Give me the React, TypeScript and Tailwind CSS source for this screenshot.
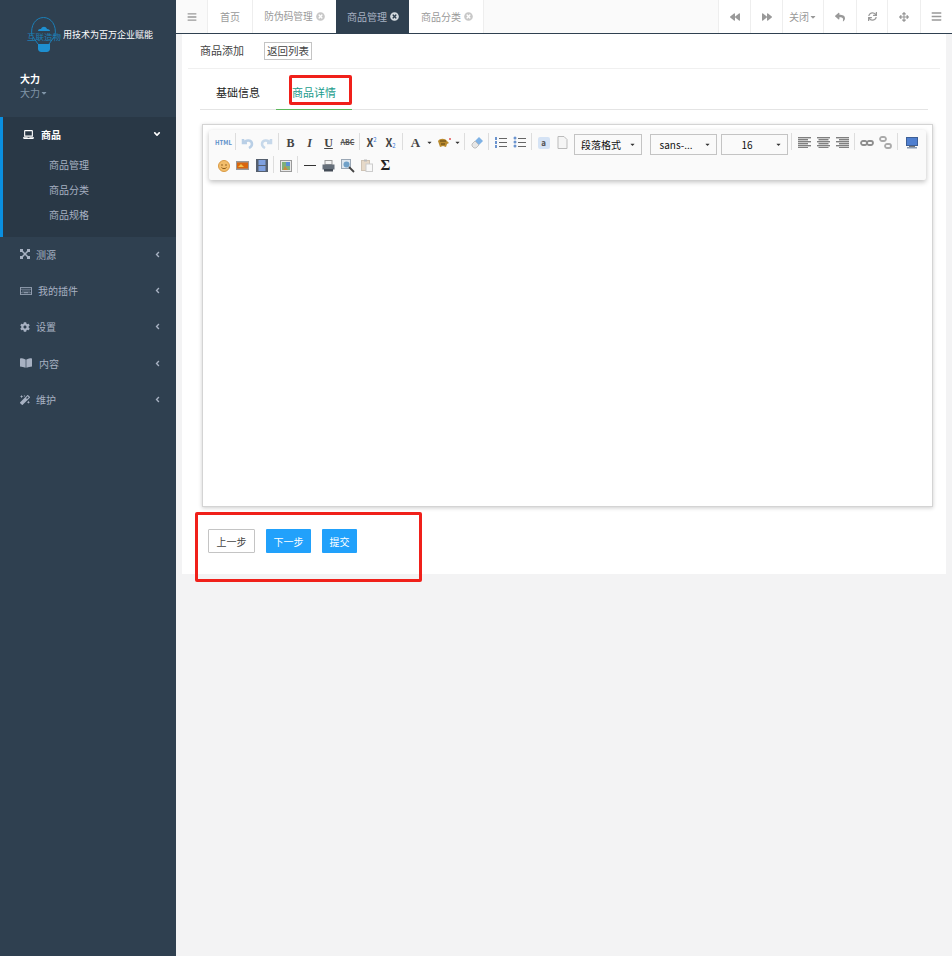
import * as React from 'react';
import {
  FaAngleDown,
  FaAngleLeft,
  FaArrowsAlt,
  FaBackward,
  FaBars,
  FaBookOpen,
  FaCaretDown,
  FaCog,
  FaForward,
  FaLaptop,
  FaMagic,
  FaRegKeyboard,
  FaReply,
  FaSync,
  FaTimesCircle,
} from 'react-icons/fa';

function CrossIcon() {
  return (
    <svg width="10" height="10" viewBox="0 0 10 10" fill="none">
      <path d="M1.500 1.500l7 7M8.500 1.500l-7 7" stroke="currentColor" strokeWidth="1.500" />
      <rect x="0" y="0" width="3" height="3" fill="currentColor" />
      <rect x="7" y="0" width="3" height="3" fill="currentColor" />
      <rect x="0" y="7" width="3" height="3" fill="currentColor" />
      <rect x="7" y="7" width="3" height="3" fill="currentColor" />
    </svg>
  );
}

const menu = [
  { label: '测源', icon: <CrossIcon />, gap: 'ml-[6px]' },
  { label: '我的插件', icon: <FaRegKeyboard size={12} />, gap: 'ml-[6px]' },
  { label: '设置', icon: <FaCog size={10} />, gap: 'ml-[6px]' },
  { label: '内容', icon: <FaBookOpen size={12} />, gap: 'ml-[7px]' },
  { label: '维护', icon: <FaMagic size={10} />, gap: 'ml-[6px]' },
];

function Sidebar() {
  return (
    <aside className="w-[176px] shrink-0 bg-[#2f4050] text-[10px]">
      <div className="h-[117px] pl-[20px] pt-[17px]">
        <div className="flex items-center pl-[7px]">
          <div className="relative h-[36px] w-[36px] shrink-0">
            <svg width="36" height="36" viewBox="0 0 36 36" fill="none">
              <path d="M5 19C3 8 9 .5 16.500 .5S30 8 28 19" stroke="#1b7fb8" strokeWidth="1" />
              <path d="M6 20l5 7M27 20l-5 7" stroke="#1b7fb8" strokeWidth="1" />
              <path d="M11 27h12v5c0 2-2 3-3 3h-6c-1 0-3-1-3-3z" fill="#1e8fd0" />
              <path d="M11 14c0-2 2-2 3-2 1-3 5-3 6 0 2 0 3 1 3 2z" fill="#1e8fd0" />
            </svg>
            <span className="absolute left-0 top-[12px] whitespace-nowrap text-[8.500px] leading-[14px] text-[#1e7fb4]">
              互联造物
            </span>
          </div>
          <span className="whitespace-nowrap text-[9px] leading-[14px] text-white">用技术为百万企业赋能</span>
        </div>
        <div className="mt-[19px] text-[10px] font-bold leading-[14px] text-white">大力</div>
        <div className="flex items-center text-[10px] leading-[14px] text-[#8095a8]">
          大力
          <FaCaretDown size={8} />
        </div>
      </div>

      <div className="h-[120px] border-l-[3px] border-[#0a8fe0] bg-[#293846]">
        <div className="flex h-[34px] items-center pl-[20px] pr-[14px] text-white">
          <FaLaptop size={11} />
          <span className="ml-[7px] font-bold">商品</span>
          <FaAngleDown size={10} className="ml-auto" />
        </div>
        <div className="pl-[46px] pt-[1px] text-[#a7b1c2]">
          <div className="h-[25px] leading-[25px]">商品管理</div>
          <div className="h-[25px] leading-[25px]">商品分类</div>
          <div className="h-[25px] leading-[25px]">商品规格</div>
        </div>
      </div>

      <nav className="text-[#a7b1c2]">
        {menu.map((item) => (
          <div key={item.label} className="flex h-[36.400px] items-center pb-[2px] pl-[20px] pr-[14px]">
            {item.icon}
            <span className={item.gap}>{item.label}</span>
            <FaAngleLeft size={9} className="ml-auto" />
          </div>
        ))}
      </nav>
    </aside>
  );
}

function TabClose({ dark }: { dark?: boolean }) {
  return <FaTimesCircle size={9} className={dark ? 'ml-[3px] text-[#d5dbe0]' : 'ml-[3px] text-[#c8c8c8]'} />;
}

function TopBar() {
  const cell = 'flex h-full items-center justify-center border-l border-[#eeeeee] bg-white text-[#999999]';
  return (
    <header className="flex h-[34px] border-b border-[#2f4050] bg-[#fafafa] text-[10px] text-[#999999]">
      <div className="flex w-[31px] items-center justify-center">
        <FaBars size={10} className="text-[#999999]" />
      </div>
      <div className={`${cell} w-[45px]`}>首页</div>
      <div className={`${cell} w-[84px] text-[9.700px]`}>
        防伪码管理
        <TabClose />
      </div>
      <div className="flex h-full w-[73px] items-center justify-center bg-[#2f4050] pl-[1px] text-[#a7b1c2]">
        商品管理
        <TabClose dark />
      </div>
      <div className="flex h-full w-[75px] items-center justify-center border-r border-[#eeeeee] bg-white pl-[2px]">
        商品分类
        <TabClose />
      </div>
      <div className="ml-auto flex h-full">
        <div className={`${cell} w-[32px]`}><FaBackward size={10} /></div>
        <div className={`${cell} w-[32px]`}><FaForward size={10} /></div>
        <div className={`${cell} w-[41px]`}>
          关闭
          <FaCaretDown size={8} />
        </div>
        <div className={`${cell} w-[33px]`}><FaReply size={10} /></div>
        <div className={`${cell} w-[31px]`}><FaSync size={9} /></div>
        <div className={`${cell} w-[33px]`}><FaArrowsAlt size={10} /></div>
        <div className={`${cell} w-[32px]`}><FaBars size={11} /></div>
      </div>
    </header>
  );
}

function Btn({ children }: { children: React.ReactNode }) {
  return <div className="flex h-[20px] w-[19px] shrink-0 items-center justify-center">{children}</div>;
}

function Sep() {
  return (
    <div className="flex h-[20px] w-[5px] shrink-0 justify-center">
      <div className="h-[17px] w-px bg-[#dddddd]" />
    </div>
  );
}

function Select({ label, width, pad }: { label: string; width: string; pad: string }) {
  return (
    <div className={`${width} ${pad} relative mt-[3px] flex h-[21px] shrink-0 items-center justify-center border border-[#c4c4c4] text-[10px] text-[#111111]`}>
      {label}
      <FaCaretDown size={7} className="absolute right-[5px] text-[#333333]" />
    </div>
  );
}

function Arrow() {
  return <FaCaretDown size={7} className="w-[9px] shrink-0 text-[#333333]" />;
}

function Lines({ aligns }: { aligns: number[] }) {
  return (
    <svg width="13" height="11" viewBox="0 0 13 11">
      {aligns.map((x, i) => (
        <rect key={i} x={x} y={i * 2} width={13 - (i % 2 === 0 ? 0 : 3)} height="1.400" fill="#808080" />
      ))}
    </svg>
  );
}

function ListIcon({ kind }: { kind: 'ol' | 'ul' }) {
  return (
    <svg width="13" height="13" viewBox="0 0 13 13">
      {[2, 6, 10].map((y) => (
        <g key={y}>
          {kind === 'ol' ? (
            <rect x="1" y={y - 1} width="2" height="3" fill="#6b94cf" />
          ) : (
            <circle cx="2" cy={y} r="1.500" fill="#6b94cf" />
          )}
          <rect x="5" y={y} width="8" height="1" fill="#666666" />
        </g>
      ))}
    </svg>
  );
}

function Toolbar() {
  const serif = "font-['Liberation_Serif',serif]";
  return (
    <div className="mx-[6px] mt-[5px] h-[50px] rounded-[2px] bg-[#fafafa] pl-[5px] pt-[1px] shadow-[0_2px_5px_rgba(0,0,0,0.25)]">
      <div className="flex h-[23px] items-center">
        <Btn><span className="text-[6px] font-bold text-[#5b8fc9]">HTML</span></Btn>
        <Sep />
        <Btn>
          <svg width="13" height="12" viewBox="0 0 13 12" fill="none" stroke="#b9cfe6" strokeWidth="2.500">
            <path d="M2 2v4h4M3 6c2-4 8-3 8 1 0 2-1 3-3 4" />
          </svg>
        </Btn>
        <Btn>
          <svg width="13" height="12" viewBox="0 0 13 12" fill="none" stroke="#c6d8ea" strokeWidth="2.500">
            <path d="M11 2v4H7M10 6C8 2 2 3 2 7c0 2 1 3 3 4" />
          </svg>
        </Btn>
        <Sep />
        <Btn><span className={`${serif} text-[12px] font-bold text-[#444444]`}>B</span></Btn>
        <Btn><span className={`${serif} text-[12px] font-bold italic text-[#444444]`}>I</span></Btn>
        <Btn><span className={`${serif} text-[12px] font-bold text-[#444444] underline`}>U</span></Btn>
        <Btn><span className="text-[7px] font-bold text-[#555555] line-through">ABC</span></Btn>
        <Sep />
        <Btn>
          <span className="text-[11px] font-bold text-[#444444]">X</span>
          <span className="mb-[6px] text-[6px] text-[#3b78d8]">2</span>
        </Btn>
        <Btn>
          <span className="text-[11px] font-bold text-[#444444]">X</span>
          <span className="mt-[6px] text-[6px] text-[#3b78d8]">2</span>
        </Btn>
        <Sep />
        <div className="w-[1px] shrink-0" />
        <Btn><span className={`${serif} text-[13px] font-bold text-[#444444]`}>A</span></Btn>
        <Arrow />
        <Btn>
          <svg width="14" height="11" viewBox="0 0 14 11">
            <path d="M1 4c2-3 7-3 9 0l2 2-2 1-1 3-3-1-3 1-1-3z" fill="#b98a2e" />
            <path d="M3 4h6M4 7h4" stroke="#5b4312" strokeWidth="1" />
            <circle cx="13" cy="2" r="1" fill="#e05555" />
          </svg>
        </Btn>
        <Arrow />
        <Sep />
        <Btn>
          <svg width="14" height="14" viewBox="0 0 14 14">
            <path d="M9 1l4 4-4 4-4-4z" fill="#7fb2e5" />
            <path d="M5 5l4 4-3 3H4l-2-2V8z" fill="#e6e6e6" stroke="#aaaaaa" strokeWidth="0.700" />
          </svg>
        </Btn>
        <Sep />
        <Btn><ListIcon kind="ol" /></Btn>
        <Btn><ListIcon kind="ul" /></Btn>
        <Sep />
        <Btn>
          <div className="flex h-[12px] w-[12px] items-center justify-center rounded-[2px] bg-[#d5e3f5] text-[8px] font-bold text-[#555555]">a</div>
        </Btn>
        <Btn>
          <svg width="11" height="13" viewBox="0 0 11 13" fill="#f5f5f5" stroke="#bbbbbb">
            <path d="M1 .500h6l3 3v9H1z" />
          </svg>
        </Btn>
        <div className="w-[2px] shrink-0" />
        <Select label="段落格式" width="w-[68px]" pad="pr-[14px]" />
        <div className="w-[8px] shrink-0" />
        <Select label="sans-..." width="w-[67px]" pad="pr-[15px]" />
        <div className="w-[4px] shrink-0" />
        <Select label="16" width="w-[67px]" pad="pr-[15px]" />
        <div className="flex h-[20px] w-[7px] shrink-0 justify-center">
          <div className="h-[17px] w-px bg-[#dddddd]" />
        </div>
        <Btn><Lines aligns={[0, 0, 0, 0, 0, 0]} /></Btn>
        <Btn><Lines aligns={[0, 1.500, 0, 1.500, 0, 1.500]} /></Btn>
        <Btn><Lines aligns={[0, 3, 0, 3, 0, 3]} /></Btn>
        <Sep />
        <Btn>
          <svg width="14" height="6" viewBox="0 0 14 6" fill="none" stroke="#8e8e8e" strokeWidth="1.800">
            <rect x="1" y="1" width="6" height="4" rx="2" />
            <rect x="7" y="1" width="6" height="4" rx="2" />
          </svg>
        </Btn>
        <Btn>
          <svg width="13" height="13" viewBox="0 0 13 13" fill="none" stroke="#aaaaaa" strokeWidth="1.800">
            <rect x="1" y="1" width="6" height="4" rx="2" />
            <rect x="6" y="8" width="6" height="4" rx="2" />
          </svg>
        </Btn>
        <Sep />
        <div className="w-[2px] shrink-0" />
        <Btn>
          <svg width="12" height="12" viewBox="0 0 12 12">
            <rect x="0.500" y="0.500" width="11" height="8" fill="#4f7fd0" stroke="#3d5f96" />
            <rect x="3" y="9" width="6" height="1" fill="#777777" />
            <rect x="1" y="10" width="10" height="1.500" fill="#8a9ab0" />
          </svg>
        </Btn>
      </div>
      <div className="flex h-[23px] items-center">
        <Btn>
          <svg width="12" height="12" viewBox="0 0 12 12">
            <circle cx="6" cy="6" r="5.500" fill="#f2bd6b" stroke="#d99a45" />
            <circle cx="4" cy="5" r="0.800" fill="#8a5a1a" />
            <circle cx="8" cy="5" r="0.800" fill="#8a5a1a" />
            <path d="M3.500 7.500c1 1.500 4 1.500 5 0" stroke="#8a5a1a" fill="none" />
          </svg>
        </Btn>
        <Btn>
          <svg width="13" height="9" viewBox="0 0 13 9">
            <rect width="13" height="9" fill="#999999" />
            <rect x="1" y="1.500" width="11" height="6" fill="#d9660d" />
            <path d="M2 6l3-3 3 3z" fill="#f6c04a" />
          </svg>
        </Btn>
        <Btn>
          <svg width="12" height="13" viewBox="0 0 12 13">
            <rect width="12" height="13" fill="#555f6e" />
            <rect x="2.500" y="1" width="7" height="5" fill="#7fa1e0" />
            <rect x="2.500" y="7" width="7" height="5" fill="#7fa1e0" />
          </svg>
        </Btn>
        <Sep />
        <Btn>
          <svg width="12" height="12" viewBox="0 0 12 12">
            <rect x="0.500" y="0.500" width="11" height="11" fill="#e8e8e8" stroke="#999999" />
            <rect x="2" y="2" width="8" height="8" fill="#7fb07a" />
            <path d="M6 2h4v4H6z" fill="#5c8fd6" />
            <path d="M3 10l2-4 3 4z" fill="#c98a3e" />
          </svg>
        </Btn>
        <Sep />
        <Btn><div className="h-px w-[12px] bg-[#333333]" /></Btn>
        <Btn>
          <svg width="13" height="12" viewBox="0 0 13 12">
            <rect x="3" y="0.500" width="7" height="4" fill="#f2f2f2" stroke="#999999" />
            <rect x="0.500" y="4.500" width="12" height="5" fill="#666f7a" />
            <rect x="2" y="9" width="9" height="2.500" fill="#444c57" />
          </svg>
        </Btn>
        <Btn>
          <svg width="14" height="14" viewBox="0 0 14 14">
            <rect x="0.500" y="0.500" width="9" height="9" fill="#dde6ef" stroke="#9aa7b5" />
            <circle cx="5.500" cy="5.500" r="3" fill="#6fa0c8" />
            <path d="M8 8l5 5" stroke="#444444" strokeWidth="1.800" />
          </svg>
        </Btn>
        <Btn>
          <svg width="12" height="13" viewBox="0 0 12 13">
            <rect x="0.500" y="1.500" width="8" height="10" fill="#e6d9c8" stroke="#cfc3b4" />
            <rect x="5" y="5" width="6.500" height="7.500" fill="#f8f8f8" stroke="#cccccc" />
            <rect x="3" y="0.500" width="3" height="2" fill="#bbbbbb" />
          </svg>
        </Btn>
        <Btn><span className={`${serif} text-[15px] font-bold text-[#222222]`}>Σ</span></Btn>
      </div>
    </div>
  );
}

function Editor() {
  return (
    <div className="ml-[20px] mt-[14px] h-[383px] w-[731px] border border-[#d4d4d4] shadow-[0_1px_4px_rgba(0,0,0,0.2)]">
      <Toolbar />
    </div>
  );
}

export default function App() {
  return (
    <div className="flex h-[956px] font-['Noto_Sans_CJK_SC','Liberation_Sans',sans-serif]">
      <Sidebar />
      <main className="relative min-w-0 flex-1 bg-[#f3f3f4]">
        <TopBar />
        <section className="mx-[6px] h-[540px] bg-white">
          <div className="mx-[6px] flex h-[35px] items-center border-b border-[#f0f0f0] pl-[12px] text-[11px] text-[#444444]">
            <span className="mb-[2px]">商品添加</span>
            <span className="ml-[20px] flex h-[18px] w-[48px] items-center justify-center border border-[#c4c4c4] text-[10.500px]">
              返回列表
            </span>
          </div>
          <div className="ml-[18px] mt-[7px] flex h-[34px] w-[728px] border-b border-[#e4e4e4] text-[11px]">
            <div className="flex w-[76px] items-center justify-center pb-[1px] text-[#222222]">基础信息</div>
            <div className="flex h-[34px] w-[76px] items-center justify-center border-b border-[#5cb85c] pb-[1px] text-[#1a9c8c]">
              商品详情
            </div>
          </div>
          <Editor />
          <div className="ml-[26px] mt-[22px] flex gap-[11px] text-[10px]">
            <span className="flex h-[24px] w-[47px] items-center justify-center rounded-[1px] border border-[#c4c4c4] text-[#444444]">上一步</span>
            <span className="flex h-[24px] w-[45px] items-center justify-center rounded-[1px] bg-[#21a1fb] text-white">下一步</span>
            <span className="flex h-[24px] w-[35px] items-center justify-center rounded-[1px] bg-[#21a1fb] text-white">提交</span>
          </div>
        </section>
        {/* annotation boxes drawn over the screenshot */}
        <div className="absolute left-[113px] top-[75px] h-[30px] w-[63px] rounded-[2px] border-[3px] border-[#f0201a]" />
        <div className="absolute left-[19px] top-[512px] h-[70px] w-[227px] rounded-[2px] border-[3px] border-[#f0201a]" />
      </main>
    </div>
  );
}
